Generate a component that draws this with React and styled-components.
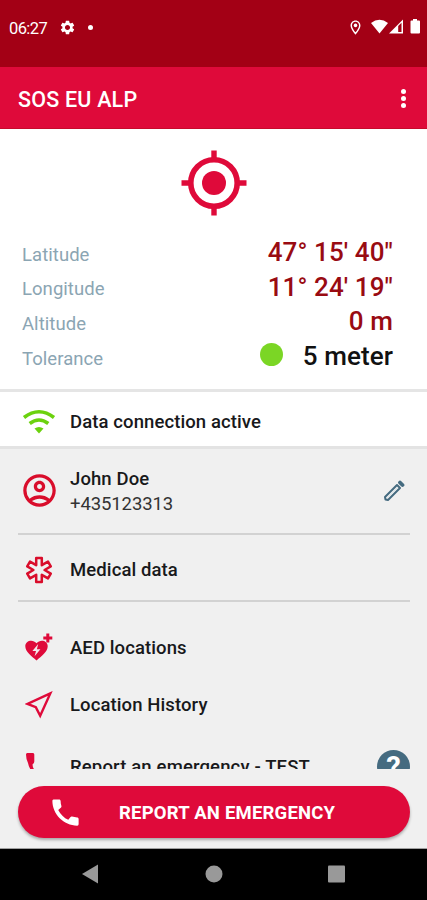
import React from "react";
import styled, { createGlobalStyle } from "styled-components";
import {
  MdCall,
  MdOutlineAccountCircle,
  MdOutlineLocationOn,
  MdSettings,
} from "react-icons/md";

const coordinates = [
  { label: "Latitude", value: "47° 15' 40\"" },
  { label: "Longitude", value: "11° 24' 19\"" },
  { label: "Altitude", value: "0 m" },
  { label: "Tolerance", value: "5 meter", accuracy: true },
];

const SignalIcons = () => (
  <svg width="49" height="16" viewBox="0 0 49 16" fill="#fff">
    <path d="M0 4Q8.5-2.5 17 4L8.5 14.5Z" />
    <path d="M18 14.5L32 .5V14.5Z" />
    <path d="M27.2 7L30.5 3.7V13H27.2Z" fill="#a30015" />
    <path d="M42 0h4v1.5h2q1 0 1 1V13.5q0 1-1 1h-7.5q-1 0-1-1V2.5q0-1 1-1H42Z" />
  </svg>
);

const TargetIcon = () => (
  <svg width="66" height="66" viewBox="0 0 66 66" fill="none" stroke="#df0a3a">
    <circle cx="33" cy="33" r="23.2" strokeWidth="5.6" />
    <circle cx="33" cy="33" r="12" fill="#df0a3a" stroke="none" />
    <path d="M33 .5v8M33 57v8.5M.5 33h8M57 33h8.5" strokeWidth="5.4" />
  </svg>
);

const WifiIcon = () => (
  <svg width="34" height="26" viewBox="0 0 34 26" fill="none" stroke="#6bd20e">
    <path d="M2 8.5Q17-3 32 8.5" strokeWidth="3.6" />
    <path d="M7.7 14.5Q17 7.5 26.3 14.5" strokeWidth="3.6" />
    <path d="M12.5 19.5Q17 16.5 21.5 19.5L17 24.5Z" fill="#6bd20e" stroke="none" />
  </svg>
);

const EditIcon = () => (
  <svg width="22" height="22" viewBox="0 0 22 22" fill="none" stroke="#456b80">
    <path
      d="M2.5 19.5L2 17L14 5L17 8L5 20Z"
      strokeWidth="2"
      strokeLinejoin="round"
    />
    <path d="M4.5 17.5L14.5 7.5" stroke="#dce6ea" strokeWidth="1" />
    <path d="M17 2.5L19.5 5" strokeWidth="3.8" strokeLinecap="round" />
  </svg>
);

const MedicalIcon = () => (
  <svg width="28" height="28" viewBox="-14 -14 28 28">
    <path
      d="M-2.8-12H2.8V-4.85L8.99-8.42L11.79-3.58L5.6 0L11.79 3.58L8.99 8.42L2.8 4.85V12H-2.8V4.85L-8.99 8.42L-11.79 3.58L-5.6 0L-11.79-3.58L-8.99-8.42L-2.8-4.85Z"
      fill="none"
      stroke="#d90d2b"
      strokeWidth="2.5"
      strokeLinejoin="round"
    />
  </svg>
);

const HeartIcon = () => (
  <svg width="28" height="28" viewBox="0 0 28 28" fill="#df0a3a">
    <path d="M11.5 27.5C6.5 23 .3 19 .3 13.3C.3 7.3 8 5.7 11.5 10.3C15 5.7 22.7 7.3 22.7 13.3C22.7 19 16.5 23 11.5 27.5Z" />
    <path d="M13.2 11L7.4 18H11L9.6 23.2L15.4 16.2H11.9Z" fill="#f5e6ea" />
    <path d="M21.3 .5h3v3h3v3h-3v3h-3v-3h-3v-3h3Z" />
  </svg>
);

const ArrowIcon = () => (
  <svg width="28" height="28" viewBox="0 0 28 28">
    <path
      d="M25.3 2.4L2.5 12.9L10.8 16.2L15.2 24.8Z"
      fill="none"
      stroke="#df0a3a"
      strokeWidth="2.4"
    />
  </svg>
);

const TestCallIcon = () => (
  <svg width="28" height="28" viewBox="0 0 28 28" fill="#df0a3a">
    <path d="M2.2 0H8Q9.3 0 9.3 1.5V8.5Q9.3 10 7.5 11.5Q7.5 14 10 18L7.5 20Q3.5 13.5 3 10Q1 6 1 1.5Q1 0 2.2 0Z" />
  </svg>
);

const NavIcons = () => (
  <svg width="263" height="20" viewBox="0 0 263 20" fill="#999">
    <path d="M0 10L16 .5V19.5Z" />
    <circle cx="132" cy="10" r="8.5" />
    <rect x="246" y="1.5" width="17" height="17" rx="1" />
  </svg>
);

const App = () => {
  return (
    <Screen>
      <GlobalStyle />
      <StatusBar>
        <Clock>06:27</Clock>
        <MdSettings size={17} />
        <Dot />
        <StatusRight>
          <MdOutlineLocationOn size={17} />
          <SignalIcons />
        </StatusRight>
      </StatusBar>

      <AppBar>
        <Title>SOS EU ALP</Title>
        <Menu>
          <MenuDot />
          <MenuDot />
          <MenuDot />
        </Menu>
      </AppBar>

      <Position>
        <TargetIcon />
        <Coordinates>
          {coordinates.map(({ label, value, accuracy }) => (
            <Coordinate key={label}>
              <Label>{label}</Label>
              {accuracy && <Accuracy />}
              <Value $dark={accuracy}>{value}</Value>
            </Coordinate>
          ))}
        </Coordinates>
      </Position>

      <Connection>
        <IconSlot>
          <WifiIcon />
        </IconSlot>
        <Text>Data connection active</Text>
      </Connection>

      <List>
        <Row $height={86} $divider>
          <IconSlot $color="#d90d2b">
            <MdOutlineAccountCircle size={39} />
          </IconSlot>
          <Person>
            <Text>John Doe</Text>
            <Phone>+435123313</Phone>
          </Person>
          <RowEnd>
            <EditIcon />
          </RowEnd>
        </Row>
        <Row $height={67} $top={6} $divider>
          <IconSlot>
            <MedicalIcon />
          </IconSlot>
          <Text>Medical data</Text>
        </Row>
        <Spacer />
        <Row $height={58}>
          <IconSlot>
            <HeartIcon />
          </IconSlot>
          <Text>AED locations</Text>
        </Row>
        <Row $height={57}>
          <IconSlot>
            <ArrowIcon />
          </IconSlot>
          <Text>Location History</Text>
        </Row>
        <Row $height={67}>
          <IconSlot>
            <TestCallIcon />
          </IconSlot>
          <TestText>Report an emergency - TEST</TestText>
          <RowEnd>
            <Help>?</Help>
          </RowEnd>
        </Row>
      </List>

      <Footer>
        <EmergencyButton>
          <MdCall size={35} />
          <ButtonText>REPORT AN EMERGENCY</ButtonText>
        </EmergencyButton>
      </Footer>

      <NavBar>
        <NavIcons />
      </NavBar>
    </Screen>
  );
};

export default App;

const GlobalStyle = createGlobalStyle`
  * {
    box-sizing: border-box;
  }
  body {
    margin: 0;
    overflow: hidden;
  }
  svg {
    display: block;
    flex: none;
  }
`;
const Screen = styled.div`
  width: 427px;
  height: 900px;
  display: flex;
  flex-direction: column;
  overflow: hidden;
  background: #f0f0f0;
  color: #18191b;
  font-family: Roboto, "Liberation Sans", sans-serif;
  white-space: nowrap;
`;
const StatusBar = styled.div`
  flex: none;
  height: 67px;
  padding: 0 7px 13px 9px;
  display: flex;
  align-items: center;
  background: #a30015;
  color: #fff;
`;
const Clock = styled.span`
  width: 50px;
  font-size: 16.5px;
  letter-spacing: -0.6px;
  padding-top: 2px;
`;
const Dot = styled.span`
  width: 5px;
  height: 5px;
  margin-left: 12px;
  border-radius: 50%;
  background: #fff;
`;
const StatusRight = styled.div`
  display: flex;
  align-items: center;
  gap: 7px;
  margin-left: auto;
`;
const AppBar = styled.div`
  flex: none;
  height: 62px;
  padding: 0 21px 0 18px;
  display: flex;
  align-items: center;
  justify-content: space-between;
  background: #df0a3a;
  border-bottom: 1px solid #c60b2b;
  color: #fff;
`;
const Title = styled.h1`
  margin: 4px 0 0;
  font-size: 21.5px;
  font-weight: 500;
  letter-spacing: 0.2px;
`;
const Menu = styled.div`
  display: flex;
  flex-direction: column;
  gap: 2px;
  padding-top: 2px;
`;
const MenuDot = styled.span`
  width: 5px;
  height: 5px;
  border-radius: 50%;
  background: #fff;
`;
const Position = styled.section`
  flex: none;
  height: 263px;
  padding-top: 21px;
  display: flex;
  flex-direction: column;
  align-items: center;
  background: #fff;
  border-bottom: 3px solid #e5e5e5;
`;
const Coordinates = styled.div`
  width: 100%;
  margin-top: 19px;
  padding: 0 34px 0 22px;
`;
const Coordinate = styled.div`
  height: 34.6px;
  display: flex;
  align-items: center;
`;
const Label = styled.span`
  margin-right: auto;
  padding-top: 5px;
  font-size: 18.5px;
  letter-spacing: 0.05px;
  color: #8ba5b3;
`;
const Value = styled.span`
  font-size: 26px;
  font-weight: 500;
  letter-spacing: 0.1px;
  color: ${({ $dark }) => ($dark ? "#111" : "#990b12")};
`;
const Accuracy = styled.span`
  width: 23px;
  height: 23px;
  margin: -3px 20px 0 0;
  border-radius: 50%;
  background: #7bd625;
`;
const Connection = styled.section`
  flex: none;
  height: 57px;
  padding: 6px 18px 0;
  display: flex;
  align-items: center;
  background: #fff;
  border-bottom: 3px solid #e3e3e3;
`;
const IconSlot = styled.span`
  flex: none;
  width: 42px;
  margin-right: 10px;
  display: flex;
  justify-content: center;
  color: ${({ $color }) => $color};
`;
const Text = styled.span`
  font-size: 18.5px;
  font-weight: 500;
  line-height: 25px;
  letter-spacing: 0.1px;
`;
const TestText = styled(Text)`
  letter-spacing: 0.15px;
`;
const List = styled.section`
  flex: none;
  height: 320px;
  padding: 0 17px 0 18px;
  overflow: hidden;
`;
const Row = styled.div`
  height: ${({ $height }) => $height}px;
  padding-top: ${({ $top = 0 }) => $top}px;
  display: flex;
  align-items: center;
  border-bottom: ${({ $divider }) => ($divider ? "2px solid #d2d2d2" : "none")};

  ${IconSlot} {
    padding-bottom: 2px;
  }
`;
const Spacer = styled.div`
  height: 17px;
`;
const Person = styled.div`
  display: flex;
  flex-direction: column;
  padding-top: 2px;
`;
const Phone = styled.span`
  font-size: 18.5px;
  line-height: 25px;
  letter-spacing: -0.1px;
  color: #333;
`;
const RowEnd = styled.span`
  margin-left: auto;
  padding-right: 5px;
`;
const Help = styled.span`
  width: 33px;
  height: 33px;
  margin: -3px -5px 0 0;
  padding-top: 1px;
  display: flex;
  align-items: center;
  justify-content: center;
  border-radius: 50%;
  background: #456b80;
  color: #fff;
  font-size: 29px;
  font-weight: 700;
`;
const Footer = styled.footer`
  flex: none;
  height: 80px;
  padding: 17px 17px 0 18px;
  border-bottom: 1px solid #a0a0a0;
`;
const EmergencyButton = styled.button`
  width: 100%;
  height: 52px;
  padding: 1px 0 0 30px;
  display: flex;
  align-items: center;
  border: none;
  border-radius: 26px;
  background: #df0a3a;
  box-shadow: 0 2px 3px rgba(0, 0, 0, 0.3);
  color: #fff;
  font-family: inherit;
`;
const ButtonText = styled.span`
  margin-left: 36px;
  padding-top: 1px;
  font-size: 18.5px;
  font-weight: 700;
  letter-spacing: 0.2px;
`;
const NavBar = styled.nav`
  flex: 1;
  padding: 0 0 1px 82px;
  display: flex;
  align-items: center;
  background: #000;
`;
